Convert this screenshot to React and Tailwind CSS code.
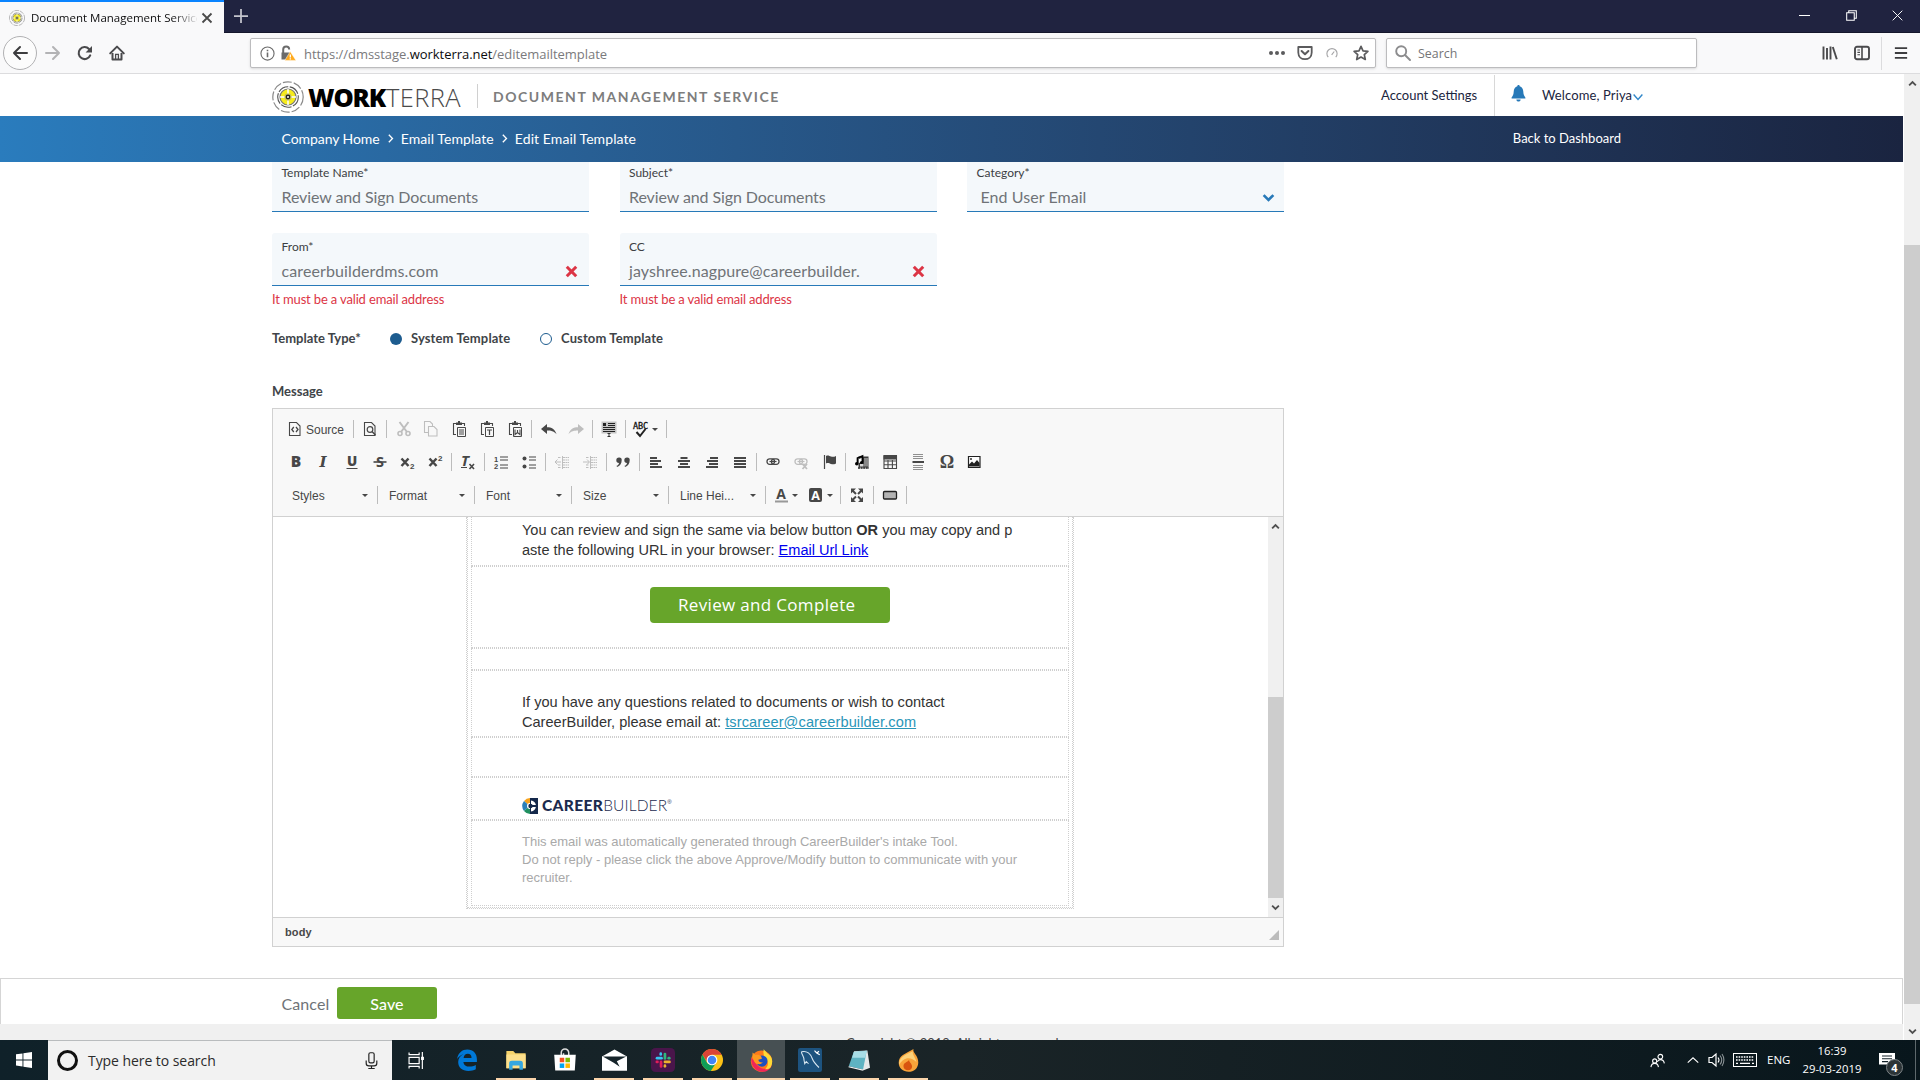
import React from 'react';

const Svg = ({ size = 16, className = '', children, ...rest }) => (
  <svg width={size} height={size} viewBox="0 0 16 16" fill="none" className={`shrink-0 overflow-visible ${className}`} {...rest}>
    {children}
  </svg>
);

/* ================= Browser chrome ================= */

const WorkterraMark = ({ size }) => (
  <svg width={size} height={size} viewBox="0 0 32 32" fill="none" className="shrink-0">
    <circle cx="16" cy="16" r="15.2" stroke="#8a8a8a" strokeWidth="1.2" strokeDasharray="9 2" />
    <circle cx="16" cy="16" r="10.3" stroke="#555" strokeWidth="1.1" strokeDasharray="11 1.5" />
    <circle cx="16" cy="16" r="8" fill="#f7ec1b" stroke="#777" strokeWidth="1.2" />
    <path d="M16 8v16M8 16h16" stroke="#fff" strokeWidth="1.5" />
    <circle cx="16" cy="16" r="3.2" fill="#f7ec1b" stroke="#999" strokeWidth=".7" />
    <circle cx="16" cy="16" r="1.7" fill="#fff" stroke="#222" strokeWidth="1.4" />
  </svg>
);

const TabStrip = () => (
  <div className="h-[33px] bg-[#202340] flex items-start shrink-0 border-b border-[#15172c]">
    <div className="w-[224px] h-[33px] bg-[#f9f9fa] border-t-2 border-[#0a84ff] flex items-center pl-[9px]">
      <WorkterraMark size={16} />
      <div className="ml-[6px] w-[166px] overflow-hidden whitespace-nowrap text-[11.5px] bg-gradient-to-r from-[#0c0c0d] from-85% to-[#0c0c0d]/10 bg-clip-text text-transparent">
        Document Management Service
      </div>
      <Svg size={12} className="ml-[4px]">
        <path d="M2 2l12 12M14 2L2 14" stroke="#4a4a4a" strokeWidth="2.4" />
      </Svg>
    </div>
    <Svg size={14} className="ml-[10px] mt-[9px]">
      <path d="M8 0v16M0 8h16" stroke="#c4c5cd" strokeWidth="2" />
    </Svg>
    <div className="ml-auto mr-[17px] mt-[10px] flex items-center gap-[35.5px]">
      <Svg size={11}>
        <path d="M0 8h16" stroke="#fff" strokeWidth="1.5" />
      </Svg>
      <Svg size={11}>
        <path d="M1 4h11v11H1zM4 4V1h11v11h-3" stroke="#fff" strokeWidth="1.5" />
      </Svg>
      <Svg size={11}>
        <path d="M1 1l14 14M15 1L1 15" stroke="#fff" strokeWidth="1.4" />
      </Svg>
    </div>
  </div>
);

const NavBar = () => (
  <div className="h-[41px] bg-[#f9f9fa] border-b border-[#dcdcde] flex items-center shrink-0">
    <div className="ml-[3px] w-[34px] h-[34px] rounded-full border border-[#b1b1b3] bg-[#fcfcfc] flex items-center justify-center">
      <Svg>
        <path d="M15 8H2M8 2L2 8l6 6" stroke="#3d3d3f" strokeWidth="2" strokeLinecap="round" strokeLinejoin="round" />
      </Svg>
    </div>
    <Svg className="ml-[8px]">
      <path d="M1 8h13M8 2l6 6-6 6" stroke="#b3b3b5" strokeWidth="2" strokeLinecap="round" strokeLinejoin="round" />
    </Svg>
    <Svg className="ml-[16px]">
      <path d="M13.2 10.4A6 6 0 1 1 12 3.9" stroke="#4a4a4c" strokeWidth="2.1" strokeLinecap="round" />
      <path d="M15 1v6.6H8.6z" fill="#4a4a4c" />
    </Svg>
    <Svg className="ml-[16px]">
      <path d="M1.2 8.4L8 1.6l6.8 6.8" stroke="#4a4a4c" strokeWidth="2" strokeLinecap="round" strokeLinejoin="round" />
      <path d="M3.5 8v6.5h9V8" stroke="#4a4a4c" strokeWidth="2" strokeLinejoin="round" />
      <path d="M6.6 14.5V9.4h2.8v5.1" stroke="#4a4a4c" strokeWidth="1.3" />
    </Svg>

    <div className="ml-[125px] w-[1126px] h-[30px] bg-white border border-[#bcbcbe] rounded-[2px] shadow-sm flex items-center">
      <Svg size={15} className="ml-[9px]">
        <circle cx="8" cy="8" r="7" stroke="#6b6b6b" strokeWidth="1.2" />
        <path d="M8 7v5M8 4v1.7" stroke="#6b6b6b" strokeWidth="1.7" />
      </Svg>
      <Svg className="ml-[5px]">
        <path d="M3.2 8V4.6a3 3 0 0 1 6 0" stroke="#6b6b6b" strokeWidth="2" />
        <path d="M1.5 7.5h8.8v7H1.5z" fill="#6b6b6b" />
        <path d="M10.2 6.6L16 15.4H4.8z" fill="#ffaa1c" stroke="#fff" strokeWidth=".5" />
        <path d="M10.3 9.4v3M10.3 13.2v1.2" stroke="#fff" strokeWidth="1.3" />
      </Svg>
      <div className="ml-[8px] pt-[3px] text-[13px] text-[#7a7a7c] tracking-[-0.04px]">
        https://dmsstage.<span className="text-[#0c0c0d]">workterra.net</span>/editemailtemplate
      </div>
      <Svg className="ml-auto mr-[12px]">
        <g fill="#5b5b5d">
          <circle cx="2" cy="8" r="2" />
          <circle cx="8" cy="8" r="2" />
          <circle cx="14" cy="8" r="2" />
        </g>
      </Svg>
      <Svg className="mr-[13px]">
        <path d="M1.3 2h13.4v5.4c0 9-13.4 9-13.4 0z" stroke="#5b5b5d" strokeWidth="1.8" strokeLinejoin="round" />
        <path d="M4.6 6L8 9.3 11.4 6" stroke="#5b5b5d" strokeWidth="2" strokeLinecap="round" strokeLinejoin="round" />
      </Svg>
      <Svg size={12} className="mr-[15px]">
        <path d="M3 13.5a6.8 6.8 0 1 1 10 0M7.5 10.5L11 6" stroke="#a5a5a7" strokeWidth="1.5" />
      </Svg>
      <Svg className="mr-[6px]">
        <path d="M8 1.3l2 4.5 4.9.5-3.6 3.3 1 4.9L8 12l-4.3 2.5 1-4.9L1.1 6.3 6 5.8z" stroke="#5b5b5d" strokeWidth="1.7" strokeLinejoin="round" />
      </Svg>
    </div>

    <div className="ml-[10px] w-[311px] h-[30px] bg-white border border-[#bcbcbe] rounded-[2px] shadow-sm flex items-center">
      <Svg className="ml-[8px]">
        <circle cx="6.2" cy="6.2" r="5" stroke="#8c8c8e" strokeWidth="1.9" />
        <path d="M10 10l5 5" stroke="#8c8c8e" strokeWidth="2" strokeLinecap="round" />
      </Svg>
      <div className="ml-[7px] pt-[3px] text-[12.4px] text-[#757577]">Search</div>
    </div>

    <Svg className="ml-auto mr-[16px]">
      <path d="M1.5 1.5v13M5 3v11.5M8.5 1.5v13" stroke="#4a4a4c" strokeWidth="1.9" />
      <path d="M10.8 2l4 12.3" stroke="#4a4a4c" strokeWidth="1.9" />
    </Svg>
    <Svg className="mr-[11px]">
      <rect x="1" y="1.8" width="14" height="12.4" rx="2" stroke="#4a4a4c" strokeWidth="1.9" />
      <path d="M8 2v12" stroke="#4a4a4c" strokeWidth="1.6" />
      <path d="M3.4 5H6M3.4 7.4H6M3.4 9.8H6" stroke="#4a4a4c" strokeWidth="1.1" />
    </Svg>
    <div className="w-px h-[33px] bg-[#dcdcde]" />
    <Svg size={14} className="ml-[12px] mr-[12px]">
      <path d="M1 2.5h14M1 8h14M1 13.5h14" stroke="#3d3d3f" strokeWidth="2.1" />
    </Svg>
  </div>
);

const ScrollArrow = ({ up }) => (
  <Svg size={9} className={up ? '' : 'rotate-180'}>
    <path d="M2 11.5L8 5.5l6 6" stroke="#505050" strokeWidth="3.2" />
  </Svg>
);

/* ================= App header ================= */

const AppHeader = () => (
  <header className="h-[42px] bg-white flex items-center shrink-0 text-[13px] text-[#1b2540]">
    <div className="ml-[272px] flex items-center h-full">
      <div className="mt-[4px]"><WorkterraMark size={32} /></div>
      <div className="ml-[4px] mt-[5px] w-[153px] flex items-center leading-none whitespace-nowrap font-['Open_Sans',sans-serif]">
        <span className="text-[25.5px] font-extrabold text-black tracking-[-1.1px] w-[78px]">WORK</span>
        <span className="text-[25.5px] font-light text-[#4a4a4a] tracking-[0.4px]">TERRA</span>
      </div>
      <div className="ml-[16px] mt-[2px] w-px h-[24px] bg-[#d0d0d0]" />
      <div className="ml-[15px] mt-[3px] text-[14px] font-bold text-[#7d7d7d] tracking-[1.53px] whitespace-nowrap">DOCUMENT MANAGEMENT SERVICE</div>
    </div>
    <div className="ml-auto mr-[260px] pt-px flex items-center h-full whitespace-nowrap">
      <span className="w-[97px]">Account Settings</span>
      <div className="ml-[16px] w-px h-full bg-[#d8d8d8]" />
      <Svg size={17} className="ml-[15px] mb-[5px]">
        <path d="M8 0c.7 0 1.1.5 1.1 1.1 2.2.6 3.3 2.5 3.4 5.1.1 2.8.8 4.3 2 5.6v1H1.5v-1c1.2-1.3 1.900-2.800 2-5.600.1-2.600 1.200-4.500 3.400-5.100C6.900.5 7.300 0 8 0zM6 13.600h4c0 2.700-4 2.700-4 0z" fill="#2779b8" />
      </Svg>
      <span className="ml-[15px] w-[91px] tracking-[0.12px]">Welcome, Priya</span>
      <Svg size={10} className="mt-[3px]">
        <path d="M1 4l7 8 7-8" stroke="#2f86c9" strokeWidth="2.2" />
      </Svg>
    </div>
  </header>
);

const Crumb = () => (
  <Svg size={9} className="mx-[6px] mt-px">
    <path d="M5 1.5l6.5 6.5L5 14.5" stroke="#fff" strokeWidth="2.4" />
  </Svg>
);

const BreadcrumbBar = () => (
  <div className="h-[46px] shrink-0 flex items-center bg-gradient-to-r from-[#2a7cbd] to-[#1a2440] text-white whitespace-nowrap">
    <div className="ml-[281.5px] mb-[2px] flex items-center text-[14px] tracking-[0.08px]">
      <span className="tracking-[-0.06px]">Company Home</span>
      <Crumb />
      <span>Email Template</span>
      <Crumb />
      <span>Edit Email Template</span>
    </div>
    <span className="ml-auto mr-[282px] mb-[1px] text-[13px]">Back to Dashboard</span>
  </div>
);

/* ================= Form ================= */

const Field = ({ label, value, valueClass = '', invalid, select, error }) => (
  <div className="w-[317px]">
    <div className="h-[53px] bg-[#f4f8fb] border-b border-[#2779b8] rounded-t-[3px] px-[9.5px] pt-[6px]">
      <div className="h-4 leading-4 text-[12px] text-[#3c4043]">{label}</div>
      <div className="mt-[6px] h-5 flex items-center justify-between text-[16px] text-[#6f7377]">
        <span className={valueClass}>{value}</span>
        {invalid && (
          <Svg size={13} className="mr-[2px]">
            <path d="M2.2 2.2l11.6 11.6M13.8 2.2L2.2 13.8" stroke="#dc3545" strokeWidth="3.7" />
          </Svg>
        )}
        {select && (
          <Svg size={13}>
            <path d="M2 5l6 6 6-6" stroke="#2779b8" strokeWidth="3.2" />
          </Svg>
        )}
      </div>
    </div>
    {error && <div className="h-[26px] leading-[26px] text-[13px] tracking-[-0.15px] text-[#dc3545]">{error}</div>}
  </div>
);

/* ================= Editor toolbar ================= */

const INK = '#474747';

const Glyph = ({ children, className = '' }) => (
  <span className={`leading-none text-[#474747] ${className}`}>{children}</span>
);

const lines = (rows) => (
  <Svg>
    {rows.map(([x, w], i) => (
      <rect key={i} x={x} y={3 + i * 3} width={w} height="2" fill={INK} />
    ))}
  </Svg>
);

const clipboard = (inner) => (
  <Svg>
    <path d="M5.5 2.5H2.5v11H5M11 2.5h2.5V5" stroke={INK} strokeWidth="1.1" />
    <path d="M5 1.5h6V4H5zM7 0h2v2H7z" fill={INK} />
    <path d="M6.5 6.5h8v9h-8z" stroke={INK} strokeWidth="1" fill="#f8f8f8" />
    {inner}
  </Svg>
);

const pageIcon = (inner) => (
  <Svg>
    <path d="M2.5 1.5h7l3.5 3.5v9.5H2.5z" stroke={INK} strokeWidth="1.1" />
    {inner}
  </Svg>
);

const indentIcon = (flip) => (
  <Svg opacity=".32">
    <path d="M8.5 2v13" stroke={INK} />
    <path d="M9 3.5h6M9 6h6M9 8.5h6M9 11h6M9 13.5h6M4 3.5h3M4 11h3M4 13.5h3" stroke={INK} strokeDasharray="2 .5" />
    <path d={flip ? 'M1 8h6M5 5.5L7.5 8 5 10.5' : 'M1 8h6M3.5 5.5L1 8l2.5 2.5'} stroke={INK} />
  </Svg>
);

const undoPath = 'M0 8l6-5v3.2c4.5 0 8 1.8 9.5 7-3-3.2-5.5-3.7-9.5-3.7V13z';

const icons = {
  preview: pageIcon(<><circle cx="8" cy="8.5" r="2.8" stroke={INK} strokeWidth="1.2" /><path d="M10 10.5l3.5 3.5" stroke={INK} strokeWidth="1.5" /></>),
  cut: (
    <Svg opacity=".32">
      <path d="M3.5 1l7.5 10M12.5 1L5 11" stroke={INK} strokeWidth="2" />
      <circle cx="4" cy="12.5" r="2" stroke={INK} strokeWidth="1.6" />
      <circle cx="12" cy="12.5" r="2" stroke={INK} strokeWidth="1.6" />
    </Svg>
  ),
  copy: (
    <Svg opacity=".32">
      <path d="M5 11.5H1.5v-11H7L9.5 3v2" stroke={INK} strokeWidth="1.1" />
      <path d="M5.5 5.5H11l3 3v6.5H5.5z" stroke={INK} strokeWidth="1.1" />
    </Svg>
  ),
  paste: clipboard(<path d="M8 9h5M8 11h5M8 13h5" stroke={INK} />),
  pasteText: clipboard(<path d="M8 9h5M10.5 9v5" stroke={INK} strokeWidth="1.2" />),
  pasteWord: clipboard(<path d="M8 8.5v5l2.5-2 2.5 2v-5M10.5 9v3" stroke={INK} strokeWidth="1.1" />),
  undo: <Svg><path d={undoPath} fill={INK} /></Svg>,
  redo: <Svg opacity=".32"><path d={undoPath} fill={INK} transform="matrix(-1 0 0 1 16 0)" /></Svg>,
  selectAll: (
    <Svg>
      <path d="M.5 .5h15v12H.5z" fill="#c4c4c4" />
      <path d="M2 2h3v3H2zM7 2h7v1H7zM7 4h7v1H7zM2 6h12v1H2zM2 8h12v1H2zM2 10h12v1H2z" fill="#222" />
      <path d="M8 12v4M6.5 15.5h3M6.5 12.5h3" stroke="#333" />
    </Svg>
  ),
  bold: <Glyph className="text-[15.5px] font-extrabold font-['Open_Sans',sans-serif]">B</Glyph>,
  italic: <Glyph className="text-[15px] font-bold italic font-['DejaVu_Serif',serif]">I</Glyph>,
  underline: (
    <Svg>
      <text x="8" y="11.5" textAnchor="middle" fontSize="13.5" fontWeight="800" fontFamily="Open Sans" fill={INK}>U</text>
      <path d="M2.5 14.5h11" stroke={INK} />
    </Svg>
  ),
  strike: (
    <Svg>
      <text x="8" y="13" textAnchor="middle" fontSize="14.5" fontWeight="700" fontFamily="Open Sans" fill={INK}>S</text>
      <path d="M1.5 8h13" stroke={INK} strokeWidth="1.6" />
    </Svg>
  ),
  sub: (
    <Svg>
      <path d="M1.5 4.5l7 7.5M8.5 4.5L1.5 12" stroke={INK} strokeWidth="2.5" />
      <text x="10" y="14.5" fontSize="8" fontWeight="700" fontFamily="Liberation Sans" fill={INK}>2</text>
    </Svg>
  ),
  sup: (
    <Svg>
      <path d="M1.5 4.5l7 7.5M8.5 4.5L1.5 12" stroke={INK} strokeWidth="2.5" />
      <text x="10" y="7" fontSize="8" fontWeight="700" fontFamily="Liberation Sans" fill={INK}>2</text>
    </Svg>
  ),
  removeFormat: (
    <Svg>
      <text x="1" y="12" fontSize="15" fontWeight="700" fontStyle="italic" fontFamily="Open Sans" fill={INK}>T</text>
      <path d="M1 13.5h6" stroke={INK} />
      <path d="M9.5 10l4.5 5M14 10l-4.5 5" stroke={INK} strokeWidth="1.6" />
    </Svg>
  ),
  numbered: (
    <Svg>
      <path d="M7 3h8M7 6h8M7 11h8M7 14h8" stroke={INK} strokeWidth="1.2" />
      <text x="1" y="7.5" fontSize="7.5" fontWeight="700" fontFamily="Liberation Sans" fill={INK}>1</text>
      <text x="1" y="15" fontSize="7.5" fontWeight="700" fontFamily="Liberation Sans" fill={INK}>2</text>
    </Svg>
  ),
  bulleted: (
    <Svg>
      <path d="M8 3h7M8 6h7M8 11h7M8 14h7" stroke={INK} strokeWidth="1.2" />
      <circle cx="3.5" cy="4.5" r="2" fill={INK} />
      <circle cx="3.5" cy="12.5" r="2" fill={INK} />
    </Svg>
  ),
  outdent: indentIcon(false),
  indent: indentIcon(true),
  quote: (
    <Svg>
      <path d="M4 3.5a2.6 2.6 0 0 1 2.7 2.8C6.7 9.5 5 12 2 13l-.4-1.2c1.4-.6 2.2-1.5 2.4-2.9a2.7 2.7 0 1 1 0-5.4zM12 3.5a2.6 2.6 0 0 1 2.7 2.8c0 3.2-1.7 5.700-4.700 6.700l-.4-1.200c1.400-.6 2.200-1.500 2.400-2.900a2.700 2.700 0 1 1 0-5.400z" fill={INK} />
    </Svg>
  ),
  left: lines([[2, 7], [2, 11], [2, 8], [2, 12]]),
  center: lines([[4.5, 7], [2, 12], [4, 8], [2, 12]]),
  right: lines([[6, 8], [3, 11], [5, 9], [2, 12]]),
  justify: lines([[2, 12], [2, 12], [2, 12], [2, 12]]),
  link: (
    <Svg>
      <rect x="2" y="4.8" width="7.5" height="5.5" rx="2.6" stroke={INK} strokeWidth="1.3" />
      <rect x="6.5" y="4.8" width="7.5" height="5.5" rx="2.6" stroke={INK} strokeWidth="1.3" />
      <path d="M4.5 7.5h7" stroke={INK} strokeWidth="1.2" />
    </Svg>
  ),
  unlink: (
    <Svg opacity=".32">
      <rect x="2" y="4.8" width="7.5" height="5.5" rx="2.6" stroke={INK} strokeWidth="1.3" />
      <rect x="6.5" y="4.8" width="7.5" height="5.5" rx="2.6" stroke={INK} strokeWidth="1.3" />
      <path d="M4.5 7.5h7" stroke={INK} strokeWidth="1.2" />
      <path d="M9.5 10l4.5 5M14 10l-4.5 5" stroke={INK} strokeWidth="1.8" />
    </Svg>
  ),
  anchor: (
    <Svg>
      <path d="M3.5 1v14" stroke={INK} strokeWidth="1.2" />
      <path d="M5 2c2-1.2 3.5 0 5 .5s3 .5 5-.5v7.5c-2 1-3.5 1-5 .5S7 8.5 5 9.5z" fill={INK} />
    </Svg>
  ),
  embed: (
    <Svg>
      <path d="M4.5 2.5h10v11h-10z" fill="#3a3a3a" />
      <path d="M10.500 4h1v8.500h-1zM12.500 4h1v8.500h-1zM6 10h3.500v2.500H6z" fill="#d8d8d8" />
      <path d="M3.500 9.500V4l5-2v6.500" stroke="#000" strokeWidth="1.7" />
      <path d="M5 5l2.500-1v4L5 9z" fill="#fff" />
      <circle cx="2.800" cy="9.800" r="1.800" fill="#000" />
      <circle cx="7.500" cy="8.500" r="1.500" fill="#000" />
      <path d="M4 14h11" stroke="#222" strokeWidth="1.5" strokeDasharray="2 .6" />
    </Svg>
  ),
  table: (
    <Svg>
      <path d="M2 2h12.5v12.5H2zM2 7h12M2 10.8h12M6 6v8M10.4 6v8" stroke={INK} strokeWidth="1.1" />
      <path d="M1.5 1H15v4.5H1.5z" fill={INK} />
    </Svg>
  ),
  pageBreak: (
    <Svg>
      <path d="M3 .5h10M3 2.5h10M3 4.5h10M3 11.5h10M3 13.5h10M3 15.5h10" stroke="#909090" />
      <path d="M2.5 8H14" stroke={INK} strokeWidth="2" />
    </Svg>
  ),
  special: <Glyph className="text-[18px] font-bold font-['Liberation_Serif',serif]">Ω</Glyph>,
  image: (
    <Svg>
      <path d="M2.5 2.5h11.5v11H2.5z" stroke="#222" strokeWidth="1.2" fill="#fff" />
      <path d="M3 12.5v-2l3-3 2 2 3-3.5 2.5 3v3.5z" fill="#222" />
      <circle cx="5" cy="5" r="1" fill="#333" />
    </Svg>
  ),
  maximize: (
    <Svg>
      <path d="M3 3l4 4M13 3L9 7M3 13.5l4-4M13 13.5l-4-4" stroke={INK} strokeWidth="2" />
      <path d="M2 6.5V1.5h5zM14 6.5V1.5H9zM2 10v5h5zM14 10v5H9z" fill={INK} />
    </Svg>
  ),
  button: <Svg><rect x="1.5" y="4.5" width="13" height="7.5" rx="1" fill="#b3b3b3" stroke="#222" strokeWidth="1.3" /></Svg>,
};

const Sep = () => <div className="w-px h-[18px] ml-px mr-[3px] bg-[#bcbcbc]" />;

const Caret = () => (
  <div className="w-0 h-0 border-x-[3px] border-x-transparent border-t-[3px] border-t-[#474747]" />
);

// these sit on the exact centre of their button, the rest one pixel to the left
const centred = ['cut', 'undo', 'bold', 'underline', 'strike', 'sub', 'sup', 'special'];

const Tools = ({ names }) => names.map((n) => (
  <div key={n} className={`w-[28px] h-[18px] flex items-center justify-center ${centred.includes(n) ? '' : 'pr-[2px]'}`}>{icons[n]}</div>
));

const Combo = ({ label }) => (
  <div className="w-[97px] h-[18px] flex items-center">
    <span className="pl-[10px] pt-px w-[80px] text-[12px] text-[#474747]">{label}</span>
    <Caret />
    <div className="ml-auto mr-px w-px h-[18px] bg-[#bcbcbc]" />
  </div>
);

const Toolbar = () => (
  <div className="h-[108px] bg-[#f8f8f8] border-b border-[#d1d1d1] pl-[9px] pt-[11px] flex flex-col gap-[15px] font-['Liberation_Sans',Arial,sans-serif]">
    <div className="flex items-center h-[18px]">
      <div className="w-[70px] flex items-center pl-[5px]">
        {pageIcon(<path d="M6.8 6L4.8 8.5l2 2.5M9 6l2 2.5L9 11" stroke={INK} strokeWidth="1.3" />)}
        <span className="ml-[3px] pt-px text-[12px] text-[#474747]">Source</span>
      </div>
      <Sep />
      <Tools names={['preview']} />
      <Sep />
      <Tools names={['cut', 'copy', 'paste', 'pasteText', 'pasteWord']} />
      <Sep />
      <Tools names={['undo', 'redo']} />
      <Sep />
      <Tools names={['selectAll']} />
      <Sep />
      <div className="w-[36px] flex items-center pl-[3px]">
        <svg width="18" height="18" viewBox="0 0 18 18" fill="none" className="overflow-visible">
          <text x="1" y="8.5" fontSize="8.5" fontFamily="DejaVu Sans Mono" textLength="15" stroke="#111" strokeWidth=".3" fill="#111">ABC</text>
          <path d="M4.5 12l3.5 4L13.5 9" stroke="#222" strokeWidth="2" />
        </svg>
        <div className="ml-[2px]"><Caret /></div>
      </div>
      <Sep />
    </div>
    <div className="flex items-center h-[18px]">
      <Tools names={['bold', 'italic', 'underline', 'strike', 'sub', 'sup']} />
      <Sep />
      <Tools names={['removeFormat']} />
      <Sep />
      <Tools names={['numbered', 'bulleted']} />
      <Sep />
      <Tools names={['outdent', 'indent']} />
      <Sep />
      <Tools names={['quote']} />
      <Sep />
      <Tools names={['left', 'center', 'right', 'justify']} />
      <Sep />
      <Tools names={['link', 'unlink', 'anchor']} />
      <Sep />
      <Tools names={['embed', 'table', 'pageBreak', 'special', 'image']} />
    </div>
    <div className="flex items-center h-[18px]">
      {['Styles', 'Format', 'Font', 'Size', 'Line Hei...'].map((l) => <Combo key={l} label={l} />)}
      <div className="w-[36px] flex items-center pl-[7px]">
        <Svg>
          <text x="7" y="11.5" textAnchor="middle" fontSize="14" fontWeight="700" fontFamily="Open Sans" fill={INK}>A</text>
          <path d="M1 14.5h13" stroke="#999" strokeWidth="2" />
        </Svg>
        <div className="ml-[2px]"><Caret /></div>
      </div>
      <div className="w-[36px] flex items-center pl-[5px]">
        <Svg>
          <rect x="1" y="1" width="13" height="14" rx="2" fill={INK} />
          <text x="7.5" y="12.5" textAnchor="middle" fontSize="12.5" fontWeight="700" fontFamily="Open Sans" fill="#fff">A</text>
        </Svg>
        <div className="ml-[3px]"><Caret /></div>
      </div>
      <Sep />
      <Tools names={['maximize']} />
      <Sep />
      <Tools names={['button']} />
      <Sep />
    </div>
  </div>
);

/* ================= Email body ================= */

const Row = ({ className = '', children }) => (
  <div className={`border border-dotted border-[#cfcfcf] px-[50px] ${className}`}>{children}</div>
);

const CareerBuilderLogo = () => (
  <div className="flex items-center h-[16px] text-[#1b2a4e] leading-none">
    <Svg size={16}>
      <path d="M8 0h8v16H8z" fill="#14284b" />
      <path d="M8 0A8 8 0 0 0 2 3l4 3.5L8 5z" fill="#f6a21c" />
      <path d="M2 3a8.5 8.5 0 0 0 0 10l4-3.5V6.5z" fill="#2b7fb8" />
      <path d="M2 13a8 8 0 0 0 6 3v-5l-2-1.5z" fill="#1f8f5f" />
      <path d="M9 2.5a5.500 5.500 0 0 1 5 5.500 5.500 5.500 0 0 1-5 5.500z" fill="#fff" />
      <path d="M8 5a3 3 0 0 0 0 6z" fill="#fff" />
      <circle cx="8.500" cy="8" r="2.200" fill="#14284b" />
      <path d="M9 7h7v2H9z" fill="#14284b" />
    </Svg>
    <span className="ml-[4px] text-[15.5px] font-black tracking-[0.35px] font-['Lato',sans-serif]">CAREER</span>
    <span className="text-[15.5px] font-light tracking-[0.15px] font-['Lato',sans-serif]">BUILDER</span>
    <span className="text-[6px] -mt-[9px]">®</span>
  </div>
);

const EmailTable = () => (
  <div className="w-[608px] h-[392px] ml-[193px] border border-t-0 border-dotted border-[#cfcfcf] font-['Liberation_Sans',Arial,sans-serif]">
    <div className="h-[391px] border border-t-0 border-dotted border-[#cfcfcf] px-[3px]">
      <Row className="h-[49px] border-t-0 pt-[3px] text-[14.55px] leading-[20px] text-[#333] whitespace-nowrap">
        <p>You can review and sign the same via below button <b>OR</b> you may copy and p</p>
        <p>aste the following URL in your browser: <a className="text-[#0000ee] underline">Email Url Link</a></p>
      </Row>
      <Row className="h-[82px] pt-[20px]">
        <div className="ml-[128px] w-[240px] h-[36px] rounded-[4px] bg-[#67a52a] text-white text-[17px] tracking-[0.33px] leading-[36px] pl-[28px] font-['Open_Sans',sans-serif]">
          Review and Complete
        </div>
      </Row>
      <Row className="h-[22px]" />
      <Row className="h-[67px] pt-[21px] text-[14.57px] leading-[20px] text-[#333] whitespace-nowrap">
        <p>If you have any questions related to documents or wish to contact</p>
        <p>CareerBuilder, please email at: <a className="text-[#2b96b8] underline tracking-[0.11px]">tsrcareer@careerbuilder.com</a></p>
      </Row>
      <Row className="h-[40px]" />
      <Row className="h-[43px] pt-[20px]"><CareerBuilderLogo /></Row>
      <Row className="h-[86px] pt-[12px] text-[13px] leading-[18px] text-[#a9a9a9] whitespace-nowrap">
        <p className="tracking-[-0.02px]">This email was automatically generated through CareerBuilder's intake Tool.</p>
        <p className="tracking-[0.02px]">Do not reply - please click the above Approve/Modify button to communicate with your</p>
        <p>recruiter.</p>
      </Row>
    </div>
  </div>
);

const Editor = () => (
  <div className="mt-[7px] w-[1012px] h-[539px] border border-[#d1d1d1]">
    <Toolbar />
    <div className="h-[400px] flex bg-white">
      <div className="flex-1 overflow-hidden"><EmailTable /></div>
      <div className="w-[15px] bg-[#f0f0f0] flex flex-col items-center py-[5px]">
        <ScrollArrow up />
        <div className="w-full mt-[166px] h-[204px] bg-[#cdcdcd]" />
        <div className="mt-[5px]"><ScrollArrow /></div>
      </div>
    </div>
    <div className="h-[29px] bg-[#f8f8f8] border-t border-[#d1d1d1] flex items-center justify-between pl-[12px] pr-[4px]">
      <span className="text-[11px] font-bold text-[#484848] tracking-[0.1px] font-['Liberation_Sans',Arial,sans-serif]">body</span>
      <div className="mt-[6px] w-0 h-0 border-l-[10px] border-l-transparent border-b-[10px] border-b-[#bcbcbc]" />
    </div>
  </div>
);

const EditTemplatePage = () => (
  <main className="h-[816px] shrink-0 pl-[272px] overflow-hidden text-[#3c4043]">
    <div className="-mt-[3px] flex gap-[30.5px]">
      <Field label="Template Name*" value="Review and Sign Documents" valueClass="tracking-[-0.1px]" />
      <Field label="Subject*" value="Review and Sign Documents" valueClass="tracking-[-0.1px]" />
      <Field label="Category*" value="End User Email" valueClass="pl-[4px] tracking-[0.06px]" select />
    </div>
    <div className="mt-[21px] flex gap-[30.5px]">
      <Field label="From*" value="careerbuilderdms.com" valueClass="tracking-[0.11px]" invalid error="It must be a valid email address" />
      <Field label="CC" value="jayshree.nagpure@careerbuilder." valueClass="tracking-[0.1px]" invalid error="It must be a valid email address" />
    </div>
    <div className="mt-[17px] h-[20px] flex items-center text-[13px] font-bold text-[#404448]">
      <span className="w-[118px]">Template Type*</span>
      <span className="w-[12px] h-[12px] mb-px rounded-full bg-[#1d5c8f]" />
      <span className="ml-[9px] w-[129px] tracking-[0.12px]">System Template</span>
      <span className="w-[12px] h-[12px] mb-px rounded-full border border-[#1d5c8f] bg-white" />
      <span className="ml-[9px] tracking-[0.12px]">Custom Template</span>
    </div>
    <div className="mt-[33px] h-[19px] leading-[19px] text-[13px] font-bold text-[#404448]">Message</div>
    <Editor />
  </main>
);

/* ================= Taskbar ================= */

const appIcons = {
  edge: (
    <Svg size={22}>
      <path d="M.8 7.2C1.6 2.8 4.6.4 8.2.4c4.4 0 7 3 7 7v2H5.4c.2 2.4 2 3.4 4.4 3.4 1.7 0 3.2-.4 4.6-1.2v3.2c-1.5.8-3.3 1.2-5.3 1.2-4.7 0-7.5-2.5-7.5-6.5 0-2.6 1.5-4.7 3.9-5.7C3.3 4.5 1.7 5.6.8 7.2zM5.5 6.5h5.8c0-2-1-3-2.7-3-1.7 0-2.8 1.1-3.1 3z" fill="#0078d7" />
    </Svg>
  ),
  folder: (
    <Svg size={22}>
      <path d="M1 1.5h5l1.5 1.5H15v11H1z" fill="#f6d36b" />
      <path d="M1 4h14v10H1z" fill="#fde08c" />
      <path d="M3 15v-4.5C3 9 3.8 8.5 5 8.5h6c1.2 0 2 .5 2 2V15h-2.500v-3h-5v3z" fill="#35a7e0" />
    </Svg>
  ),
  store: (
    <Svg size={24}>
      <path d="M5.5 5V3.2a2.5 2.5 0 0 1 5 0V5M7 5V3.5" stroke="#ddd" strokeWidth="1" />
      <path d="M.8 4.5h14.4L14.5 15h-13z" fill="#fff" />
      <path d="M4.5 6.5h3v3h-3z" fill="#f25022" />
      <path d="M8.3 6.5h3v3h-3z" fill="#7fba00" />
      <path d="M4.5 10.3h3v3h-3z" fill="#00a4ef" />
      <path d="M8.3 10.3h3v3h-3z" fill="#ffb900" />
    </Svg>
  ),
  mail: (
    <Svg size={25}>
      <path d="M0 5.5L8 1l8 4.5v9H0z" fill="#fff" />
      <path d="M.5 5.5h15L9.5 8.5l1.8 3.5L7.5 9.5z" fill="#16242a" />
    </Svg>
  ),
  slack: (
    <Svg size={24}>
      <rect width="16" height="16" rx="3" fill="#4a154b" />
      <g strokeWidth="1.8" strokeLinecap="round">
        <path d="M4 6.8h3" stroke="#36c5f0" /><path d="M6.5 3.8v.5" stroke="#36c5f0" />
        <path d="M9.3 4v3" stroke="#2eb67d" /><path d="M11.8 6.8h.4" stroke="#2eb67d" />
        <path d="M9.3 9.3h3" stroke="#ecb22e" /><path d="M9.3 11.8v.4" stroke="#ecb22e" />
        <path d="M6.7 9.3v3" stroke="#e01e5a" /><path d="M3.9 9.3h.4" stroke="#e01e5a" />
      </g>
    </Svg>
  ),
  chrome: (
    <Svg size={22}>
      <circle cx="8" cy="8" r="8" fill="#fbc116" />
      <path d="M1.1 4A8 8 0 0 1 15 4.2H8L4.5 9.5z" fill="#db4437" />
      <path d="M1.1 4a8 8 0 0 0 6 12l3.6-5.5-6 .1z" fill="#0f9d58" />
      <circle cx="8" cy="8" r="3.9" fill="#fff" />
      <circle cx="8" cy="8" r="3.1" fill="#4285f4" />
    </Svg>
  ),
  firefox: (
    <Svg size={23}>
      <circle cx="8" cy="8.5" r="7.4" fill="#ff7a1a" />
      <path d="M1 6c-.8 5 2.3 9.7 7.5 9.9 3.5 0 6-2.2 6.8-5-2 3-6.3 4-9 1.5C4 10.5 3 8 1 6z" fill="#f0265a" />
      <path d="M9.5.2c1.5 1.3 2 2.5 4 4 2.5 2.3 2.3 6 1 8.3-.8 1.3-2.6 1.8-4 1.5 2.3-2 2.5-4.5 1-6.5C9.5 5.5 9 3 9.5.2z" fill="#ffd936" />
      <circle cx="8.3" cy="8.4" r="3.9" fill="#1c4fbf" />
      <path d="M1.8 2.5l2 1.7c1.5-.4 3 0 4 1l.5 1.5-2.5.8c.2 1.5 1.5 2 3 1.8-.5 1.7-4.5 1.8-5.7-.5C2 7 1.5 5 1.8 2.5z" fill="#ff9a1f" />
    </Svg>
  ),
  mysql: (
    <Svg size={24}>
      <rect width="16" height="16" rx="1.5" fill="#1d537f" />
      <path d="M2.3 2.5C6 1.5 8.500 4 9.500 7c.8 2.300 2.200 3.800 4.500 6M2.300 2.500c0 2 1.800 3 1.700 5.500L4.500 10.500l1-1.500L7 10.500" stroke="#dbe9f3" strokeWidth=".7" />
      <path d="M11 1.800l1.500 1.500 2 1.200M12.500 3.300L14 2.200" stroke="#fff" strokeWidth=".8" />
    </Svg>
  ),
  notepad: (
    <Svg size={23}>
      <path d="M4 1.5L13.5 1l1.8 12-4.8 2z" fill="#e5e8e9" />
      <path d="M4 2l9-.8-2.5 13L.5 12z" fill="#5fb3c2" />
      <path d="M4 2l9-.8-1 4.8L2.8 6z" fill="#a8dde6" />
      <path d="M.5 12l10 2.3-.2.9L.3 12.7z" fill="#f5f5f5" />
    </Svg>
  ),
  flame: (
    <Svg size={23}>
      <path d="M11.5 0c-1 2.5 3.5 4.5 3.3 9.5-.2 4-3 6.3-6.8 6.3S1.2 13.3 1.2 9.6C1.2 4.5 5.5 3.5 11.5 0z" fill="#f9a43a" />
      <path d="M11 1.5C10.5 4 13 6 13.5 9c-2-2-4.5-3-6.5-2.5-2.5.7-4.5 2.5-5.5 4.5C1 5.5 6 4 11 1.5z" fill="#fdd27a" />
      <path d="M8.5 7.5c-.5 1.5 2 2.5 2 4.7 0 1.6-1.2 2.6-2.8 2.6S4.5 13.8 4.5 12c0-2.5 2.5-2.5 4-4.5z" fill="#d9540f" />
    </Svg>
  ),
};

const taskbarApps = [
  { name: 'edge' },
  { name: 'folder', open: true },
  { name: 'store' },
  { name: 'mail', open: true },
  { name: 'slack', open: true },
  { name: 'chrome', open: true },
  { name: 'firefox', open: true, active: true },
  { name: 'mysql', open: true },
  { name: 'notepad', open: true },
  { name: 'flame', open: true },
];

const Taskbar = () => (
  <div className="h-[40px] shrink-0 flex items-center bg-gradient-to-r from-[#0f2129] via-[#1a2427] to-[#08161c] text-white">
    <div className="w-[48px] flex justify-center">
      <Svg>
        <path d="M0 2.3l6.5-.9v6H0zM7.4 1.3L16 0v7.4H7.4zM0 8.4h6.5v6L0 13.6zM7.4 8.4H16V16l-8.6-1.3z" fill="#fff" />
      </Svg>
    </div>
    <div className="w-[344px] h-full bg-[#f2f2f2] border-t border-[#b9bcbe] flex items-center pl-[9px] pr-[12px]">
      <div className="w-[21px] h-[21px] rounded-full border-[3px] border-[#111]" />
      <span className="ml-[10px] text-[14px] tracking-[-0.06px] text-[#2b2b2b]">Type here to search</span>
      <Svg size={17} className="ml-auto">
        <rect x="5.5" y=".7" width="5" height="9.5" rx="1.5" stroke="#222" strokeWidth="1.1" />
        <path d="M3 8v2.5c0 1.500 1 2.500 2.500 2.500h5c1.500 0 2.500-1 2.500-2.500V8M8 13v2.500M5 15.500h6" stroke="#222" strokeWidth="1.1" />
      </Svg>
    </div>
    <div className="w-[48px] flex justify-center">
      <Svg size={17}>
        <path d="M1 .5v2h9.5v-2M1 15.5v-2h9.5v2M1 5h9.5v6H1zM13.5 0v16" stroke="#fff" strokeWidth="1.1" />
        <path d="M12.3 4.5H15v3h-2.7z" fill="#fff" />
      </Svg>
    </div>
    <div className="ml-[3px] h-full flex gap-px">
      {taskbarApps.map(({ name, open, active }) => (
        <div key={name} className={`w-[48px] h-full flex flex-col items-center ${active ? 'bg-[#475053]' : ''}`}>
          <div className="h-[38px] pt-[2px] flex items-center">{appIcons[name]}</div>
          {open && <div className={`h-[2px] bg-[#fbd5ab] ${active ? 'w-full' : 'w-[40px]'}`} />}
        </div>
      ))}
    </div>
    <div className="ml-auto flex items-center h-full text-[12px]">
      <Svg size={15} className="mr-[22px]">
        <circle cx="11" cy="4" r="2.5" stroke="#fff" strokeWidth="1.2" />
        <circle cx="5" cy="8.5" r="2.2" stroke="#fff" strokeWidth="1.2" />
        <path d="M7.8 9.5C8.5 7.8 9.5 7 11 7c2.5 0 4 2 4.3 4M1 15c.3-2.5 1.8-4 4-4s3.7 1.5 4 4" stroke="#fff" strokeWidth="1.2" />
      </Svg>
      <Svg size={12} className="mr-[9px]">
        <path d="M1 11.5L8 5l7 6.5" stroke="#fff" strokeWidth="1.5" />
      </Svg>
      <Svg size={16} className="mr-[9px]">
        <path d="M1 5.5h3L8 2v12l-4-3.5H1z" stroke="#fff" strokeWidth="1.2" />
        <path d="M10 5.5c1.2 1.5 1.2 3.5 0 5" stroke="#fff" strokeWidth="1.1" />
        <path d="M12 3.5c2 2.6 2 6.4 0 9M14 2c2.5 3.5 2.5 8.5 0 12" stroke="#8b9396" strokeWidth="1.1" />
      </Svg>
      <svg width="24" height="14" viewBox="0 0 24 14" fill="none" className="mr-[10px]">
        <rect x=".5" y=".5" width="23" height="13" stroke="#fff" />
        <path d="M3 4h18M3 7h18" stroke="#fff" strokeWidth="1.3" strokeDasharray="1.6 1" />
        <path d="M3 10.3h2M7 10.3h10M19 10.3h2" stroke="#fff" strokeWidth="1.3" />
      </svg>
      <span className="w-[24px] text-[11.5px]">ENG</span>
      <div className="ml-[9px] w-[64px] text-center text-[11.3px] leading-[18px]">
        <div>16:39</div>
        <div>29-03-2019</div>
      </div>
      <div className="relative ml-[15px] mr-[20px] w-[16px] h-[16px]">
        <Svg className="block">
          <path d="M0 1h16v11.5h-4.5L9 15v-2.5H0z" fill="#fff" />
          <path d="M3 4h10M3 6.8h10M3 9.6h6" stroke="#14232a" strokeWidth="1.1" />
        </Svg>
        <div className="absolute left-[7px] top-[7px] w-[17px] h-[17px] rounded-full bg-[#2c3437] border border-[#7d8487] text-[11px] font-bold leading-[15px] text-center">4</div>
      </div>
      <div className="w-px h-full bg-[#5d686c] mr-[4px]" />
    </div>
  </div>
);

export default function App() {
  return (
    <div className="w-[1920px] h-[1080px] overflow-hidden flex flex-col bg-white font-['Open_Sans','Noto_Sans',sans-serif]">
      <TabStrip />
      <NavBar />
      <div className="h-[966px] flex shrink-0">
        <div className="w-[1903px] flex flex-col font-['Lato',sans-serif]">
          <AppHeader />
          <BreadcrumbBar />
          <EditTemplatePage />
          <div className="h-[46px] shrink-0 border border-b-0 border-[#d5d5d5] flex items-start">
            <span className="ml-[280.5px] mt-[13px] w-[55.5px] text-[16px] leading-[24px] tracking-[0.1px] text-[#6f7377]">Cancel</span>
            <button className="mt-[8px] w-[100px] h-[32px] rounded-[3px] bg-[#67a52a] text-white text-[16px] font-medium tracking-[0.1px] pt-[2px]">Save</button>
          </div>
          <div className="h-[16px] shrink-0 bg-[#f0f0f0] overflow-hidden">
            <div className="ml-[846px] mt-[11px] text-[13px] leading-[17px] text-[#444]">Copyright © 2019. All rights reserved.</div>
          </div>
        </div>
        <div className="w-[17px] bg-[#f0f0f0] flex flex-col items-center pt-[5px] border-l border-white">
          <ScrollArrow up />
          <div className="w-full mt-[157px] h-[759px] bg-[#cdcdcd]" />
          <div className="mt-[23px]"><ScrollArrow /></div>
        </div>
      </div>
      <Taskbar />
    </div>
  );
}
